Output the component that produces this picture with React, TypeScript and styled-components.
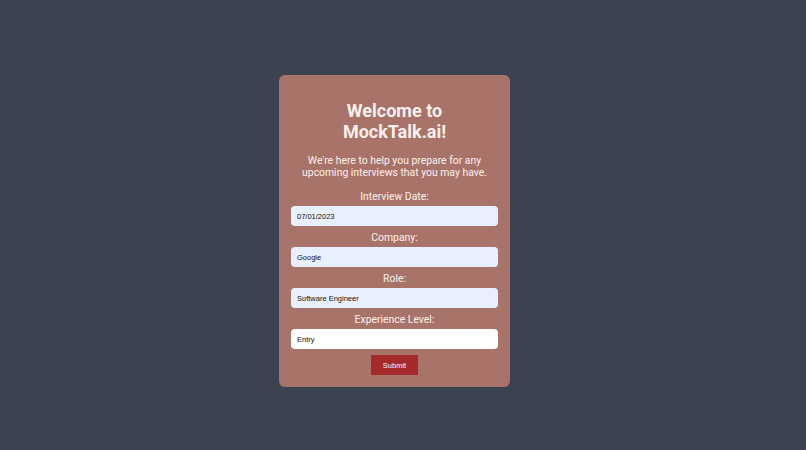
import React from "react";
import styled, { createGlobalStyle } from "styled-components";

const GlobalStyle = createGlobalStyle`
   html, body {
      margin: 0;
      padding: 0;
      background: #3c4350;
   }
`;

const Page = styled.div`
   display: flex;
   justify-content: center;
   align-items: flex-start;
   min-height: 450px;
   padding: 75px 17px 0 0;
   box-sizing: border-box;
`;

const Card = styled.form`
   width: 231px;
   box-sizing: border-box;
   padding: 25px 12px 12px;
   background: #a87469;
   border-radius: 6px;
   display: flex;
   flex-direction: column;
   align-items: stretch;
   font-family: Roboto, "Noto Sans", sans-serif;
   color: #fdf1ed;
`;

const Title = styled.h1`
   margin: 0;
   font-size: 18px;
   line-height: 21px;
   font-weight: 700;
   text-align: center;
`;

const Intro = styled.p`
   margin: 13px 0 0;
   font-size: 10.4px;
   line-height: 12px;
   text-align: center;
`;

const Label = styled.label`
   display: block;
   margin: 6px 0 3px;
   font-size: 10.4px;
   line-height: 12px;
   text-align: center;
`;

const Field = styled.div`
   &:first-of-type ${Label} {
      margin-top: 12px;
   }
`;

const Input = styled.input<{ $filled?: boolean }>`
   display: block;
   width: 100%;
   height: 20px;
   box-sizing: border-box;
   padding: 0 6px;
   border: none;
   border-radius: 4px;
   background: ${(p) => (p.$filled ? "#e8f0fe" : "#ffffff")};
   color: #111;
   font-family: "Liberation Sans", Arial, sans-serif;
   font-size: 7.5px;
   outline: none;
`;

const SubmitButton = styled.button`
   align-self: center;
   margin-top: 6px;
   width: 47px;
   height: 20px;
   padding: 0;
   border: none;
   background: #a52a2a;
   color: #fdf1ed;
   font-family: "Liberation Sans", Arial, sans-serif;
   font-size: 7.5px;
   cursor: pointer;
`;

interface FieldData {
   label: string,
   value: string,
   filled: boolean,
}

const fields: FieldData[] = [
   { label: "Interview Date:", value: "07/01/2023", filled: true },
   { label: "Company:", value: "Google", filled: true },
   { label: "Role:", value: "Software Engineer", filled: true },
   { label: "Experience Level:", value: "Entry", filled: false },
];

const App: React.FC = () => {
   return (
      <>
         <GlobalStyle />
         <Page>
            <Card onSubmit={(e) => e.preventDefault()}>
               <Title>Welcome to<br />MockTalk.ai!</Title>
               <Intro>We're here to help you prepare for any<br />upcoming interviews that you may have.</Intro>
               {fields.map((field, idx) => (
                  <Field key={idx}>
                     <Label>{field.label}</Label>
                     <Input $filled={field.filled} defaultValue={field.value} />
                  </Field>
               ))}
               <SubmitButton type="submit">Submit</SubmitButton>
            </Card>
         </Page>
      </>
   );
};

export default App;
